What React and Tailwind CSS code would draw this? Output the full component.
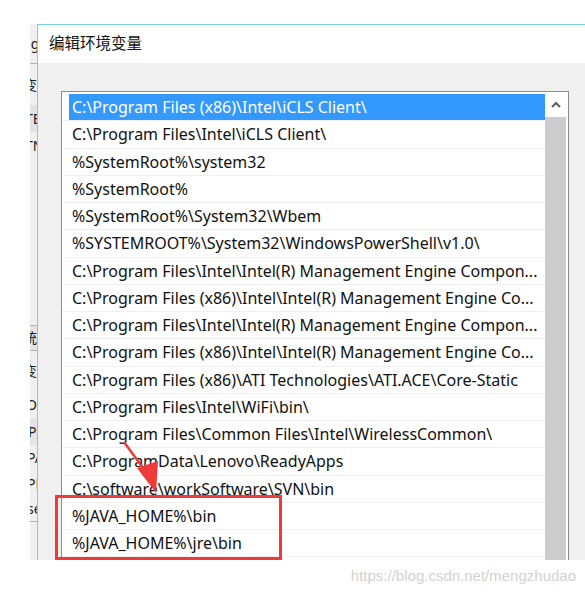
import React from "react";

const paths = [
  "C:\\Program Files (x86)\\Intel\\iCLS Client\\",
  "C:\\Program Files\\Intel\\iCLS Client\\",
  "%SystemRoot%\\system32",
  "%SystemRoot%",
  "%SystemRoot%\\System32\\Wbem",
  "%SYSTEMROOT%\\System32\\WindowsPowerShell\\v1.0\\",
  "C:\\Program Files\\Intel\\Intel(R) Management Engine Compon...",
  "C:\\Program Files (x86)\\Intel\\Intel(R) Management Engine Co...",
  "C:\\Program Files\\Intel\\Intel(R) Management Engine Compon...",
  "C:\\Program Files (x86)\\Intel\\Intel(R) Management Engine Co...",
  "C:\\Program Files (x86)\\ATI Technologies\\ATI.ACE\\Core-Static",
  "C:\\Program Files\\Intel\\WiFi\\bin\\",
  "C:\\Program Files\\Common Files\\Intel\\WirelessCommon\\",
  "C:\\ProgramData\\Lenovo\\ReadyApps",
  "C:\\software\\workSoftware\\SVN\\bin",
  "%JAVA_HOME%\\bin",
  "%JAVA_HOME%\\jre\\bin",
  "",
];

// window behind the dialog, only its right edge shows
function BackStrip() {
  return (
    <div className="w-[7px] h-full bg-[#f0f0f0] overflow-hidden flex flex-col text-[14px] leading-none text-[#222] whitespace-nowrap">
      <div className="h-[39px] shrink-0 flex items-center"><span className="ml-[-8px]">ng</span></div>
      <div className="h-px shrink-0 bg-[#b0b0b0]" />
      <div className="h-[41px] shrink-0 flex items-center"><span className="ml-[-7px]">变</span></div>
      <div className="h-[27px] shrink-0 bg-[#e2e2e2] flex items-center"><span className="ml-[-5px]">TE</span></div>
      <div className="h-[27px] shrink-0 flex items-center"><span className="ml-[-5px]">TN</span></div>
      <div className="h-[166px] shrink-0" />
      <div className="h-px shrink-0 bg-[#b0b0b0]" />
      <div className="h-[24px] shrink-0 bg-[#e4e4e4] flex items-center"><span className="ml-[-7px]">统</span></div>
      <div className="h-px shrink-0 bg-[#b0b0b0]" />
      <div className="h-[40px] shrink-0 flex items-center"><span className="ml-[-7px]">变</span></div>
      <div className="h-[27px] shrink-0 flex items-center"><span className="ml-[-4px]">O</span></div>
      <div className="h-[27px] shrink-0 bg-[#e4e4e4] flex items-center"><span className="ml-[-2px]">Pa</span></div>
      <div className="h-[25px] shrink-0 flex items-center"><span className="ml-[-3px]">PA</span></div>
      <div className="h-[27px] shrink-0 flex items-center"><span className="ml-[-3px]">PF</span></div>
      <div className="h-[24px] shrink-0 flex items-center"><span className="ml-[-3px]">se</span></div>
      <div className="h-px shrink-0 bg-[#b0b0b0]" />
    </div>
  );
}

function PathRow({ text, selected }) {
  return (
    <div className="h-[27.25px] pl-[7px] border-b border-[#efefef] flex">
      <div
        className={`flex-1 flex items-center pl-[3px] overflow-hidden whitespace-nowrap ${
          selected ? "bg-[#3399ff] text-white" : "text-[#111]"
        }`}
      >
        {text}
      </div>
    </div>
  );
}

export default function App() {
  return (
    <div
      className="relative w-[585px] h-[592px] bg-white overflow-hidden"
      style={{ fontFamily: '"Noto Sans", "Noto Sans CJK SC", sans-serif' }}
    >
      <div className="flex pt-[24px] pl-[30px] h-[560px]">
        <BackStrip />

        {/* Dialog */}
        <div className="flex-1 flex flex-col border-l border-t border-[#78d2d4] overflow-hidden">
          <div className="h-[38px] shrink-0 bg-white flex items-center pl-[11px] text-[15.5px] text-[#111]">
            编辑环境变量
          </div>

          <div className="flex-1 bg-[#f0f0f0] pt-[28px] pl-[23px] min-h-0">
            <div className="w-[508px] h-[600px] bg-white border border-[#8a8d93] flex">
              <div className="w-[483px] pt-[2px] text-[16px]">
                {paths.map((p, i) => (
                  <PathRow key={i} text={p} selected={i === 0} />
                ))}
              </div>

              {/* Scrollbar */}
              <div className="w-[21px] flex flex-col">
                <div className="h-[25px] bg-white flex items-center justify-center">
                  <svg width="10" height="7" viewBox="0 0 10 7">
                    <path d="M1 6 L5 2 L9 6" fill="none" stroke="#606060" strokeWidth="2" />
                  </svg>
                </div>
                <div className="flex-1 bg-[#cdcdcd]" />
              </div>
            </div>
          </div>
        </div>
      </div>

      <div className="h-[32px] flex items-center justify-end pr-[9px] text-[15px] text-[#d2d2d2]" style={{ fontFamily: '"Liberation Sans", Arial, sans-serif' }}>
        https://blog.csdn.net/mengzhudao
      </div>

      {/* annotation */}
      <div className="absolute left-[55px] top-[495px] w-[227px] h-[65px] border-[3px] border-[#ef3a3a]" />
      <svg className="absolute left-0 top-0" width="585" height="592" viewBox="0 0 585 592">
        <line x1="124" y1="442" x2="146" y2="472" stroke="#ef3a3a" strokeWidth="2.5" />
        <polygon points="137,468 158,461 156,493" fill="#ef3a3a" />
      </svg>
    </div>
  );
}
